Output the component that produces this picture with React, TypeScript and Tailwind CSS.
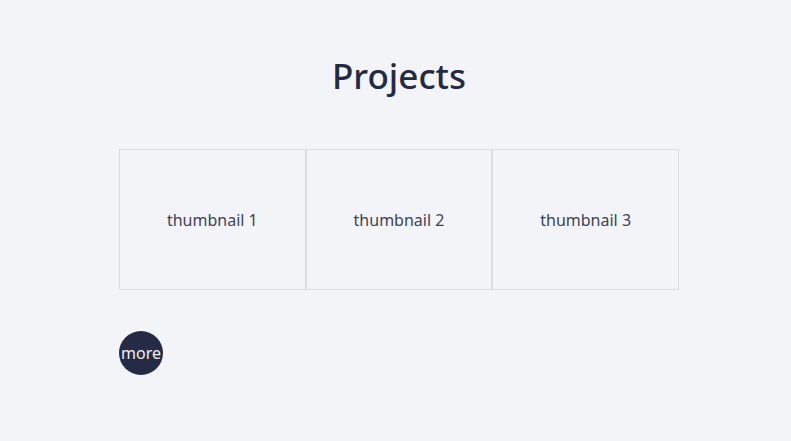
export default function App() {
  return (
    <div className="min-h-[441px] w-full bg-[#f3f4f8] pl-[7px]" style={{ fontFamily: '"Noto Sans", "Open Sans", sans-serif' }}>
      <div className="mx-auto w-[560px] pt-[52px]">
        <h1 className="text-center text-[35px] font-medium leading-[48px] text-[#232a43]">Projects</h1>
        <div className="mt-[49px] grid grid-cols-3">
          {[1, 2, 3].map((n) => (
            <div key={n} className="flex h-[141px] items-center justify-center border border-[#dcdde2] text-[16px] text-[#3b4257]">
              thumbnail {n}
            </div>
          ))}
        </div>
        <button className="mt-[41px] flex h-[44px] w-[44px] items-center justify-center rounded-full bg-[#252b45] text-[16px] text-[#eef0f5]">
          more
        </button>
      </div>
    </div>
  );
}
